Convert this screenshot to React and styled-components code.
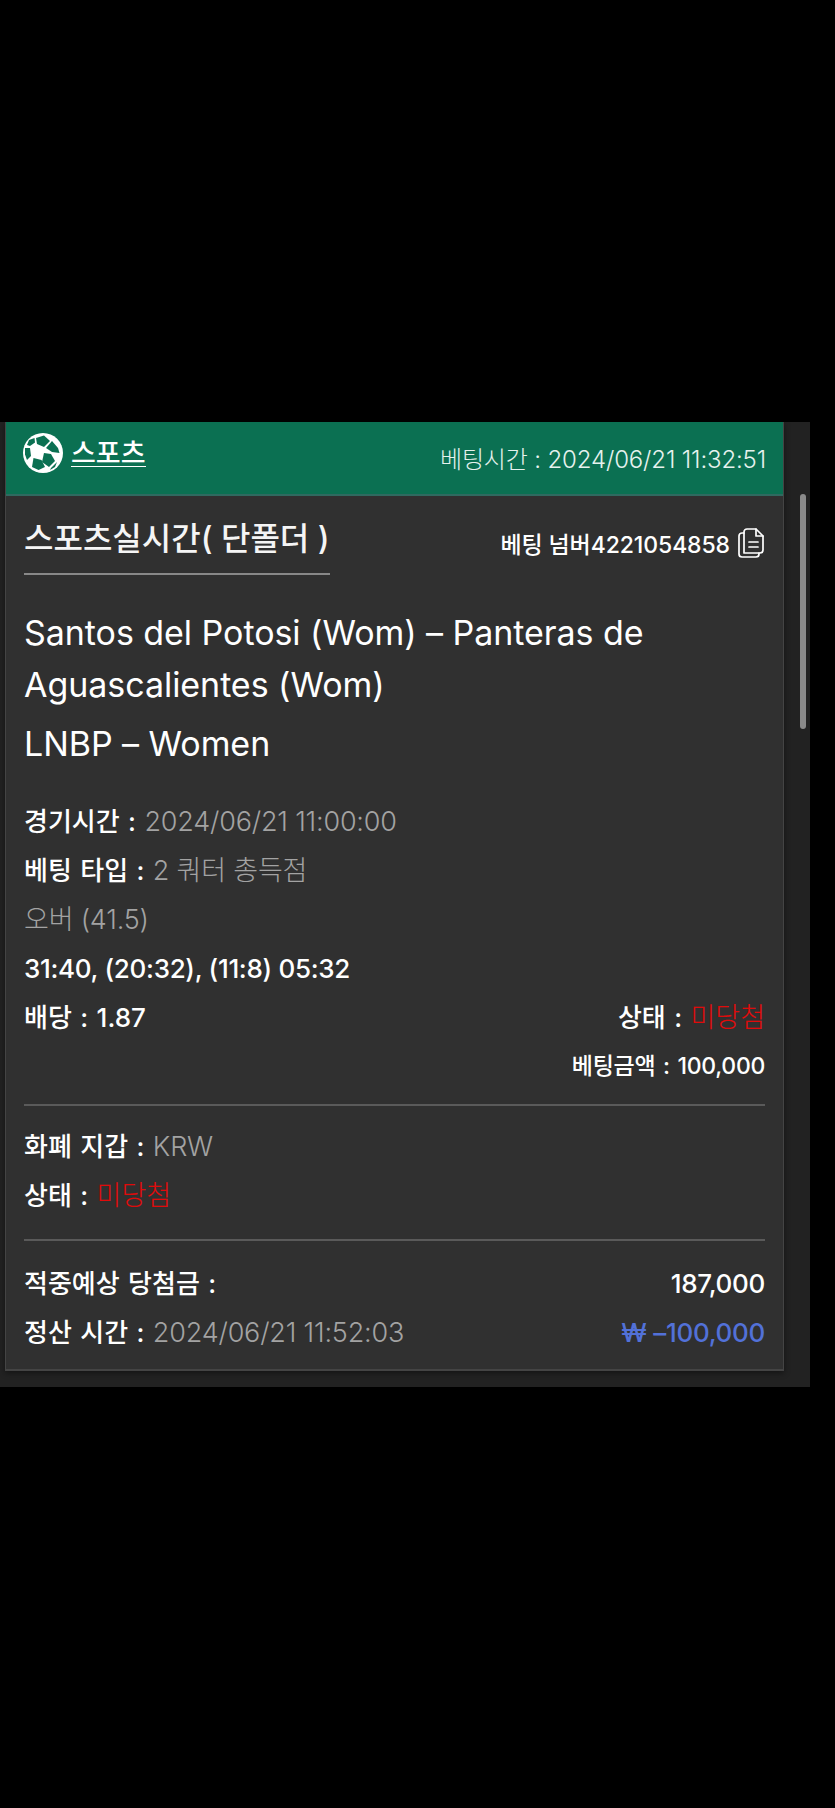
import React from 'react';
import styled, { createGlobalStyle } from 'styled-components';

const GlobalStyle = createGlobalStyle`
  html, body {
    margin: 0;
    padding: 0;
    background: #000;
  }
  body {
    font-family: Inter, "Noto Sans CJK KR", sans-serif;
    color: #fff;
  }
`;

const Page = styled.div`
  width: 835px;
  height: 1808px;
  padding-top: 422px;
  box-sizing: border-box;
  overflow: hidden;
`;

const Panel = styled.div`
  position: relative;
  width: 810px;
  height: 965px;
  background: #222;
  padding-left: 5px;
  box-sizing: border-box;
`;

const Thumb = styled.div`
  position: absolute;
  left: 800px;
  top: 72px;
  width: 6px;
  height: 235px;
  border-radius: 3px;
  background: #8a8a8a;
`;

const Card = styled.div`
  width: 779px;
  height: 949px;
  background: #303030;
  border: solid #444;
  border-width: 0 1px 2px 1px;
  box-sizing: border-box;
  box-shadow: 0 2px 6px rgba(0, 0, 0, 0.45);
`;

const Header = styled.div`
  height: 74px;
  background: #0b7052;
  border-bottom: 2px solid #2f6a60;
  box-sizing: border-box;
  display: flex;
  align-items: center;
  justify-content: space-between;
  padding: 0 17px 10px 16px;
`;

const Brand = styled.div`
  display: flex;
  align-items: center;
  gap: 7px;
  font-size: 27px;
  font-weight: 500;
`;

const BrandName = styled.span`
  border-bottom: 1px solid #fff;
  line-height: 25px;
  margin-top: 2px;
`;

const BetTime = styled.div`
  font-size: 24px;
  letter-spacing: -0.15px;
  color: #e6f2ee;
  font-weight: 300;
  margin-top: 8px;
`;

const Body = styled.div`
  padding: 19px 18px 0 18px;
`;

const TitleRow = styled.div`
  display: flex;
  align-items: center;
  justify-content: space-between;
  margin-bottom: 32px;
`;

const Title = styled.div`
  font-size: 32px;
  font-weight: 500;
  line-height: 48px;
  padding: 0 0 10px;
  border-bottom: 2px solid #888;
  color: #f5f5f5;
`;

const BetNumber = styled.div`
  display: flex;
  align-items: center;
  gap: 8px;
  font-size: 23px;
  letter-spacing: -0.1px;
  font-weight: 500;
  margin: -4px 0 0;
`;

const Match = styled.div`
  font-size: 34px;
  letter-spacing: -0.05px;
  line-height: 52px;
  font-weight: 400;
`;

const League = styled(Match)`
  margin-top: 7px;
  margin-bottom: 27px;
`;

const Row = styled.div`
  display: flex;
  justify-content: ${p => (p.$end ? 'flex-end' : 'space-between')};
  font-size: 26px;
  line-height: 49px;
  font-weight: 500;
  letter-spacing: -0.3px;
`;

const Label = styled.span`
  letter-spacing: 0;
  word-spacing: 1.5px;
`;

const Muted = styled.span`
  color: #a3a3a3;
  font-size: 27px;
  font-weight: 300;
  letter-spacing: -0.2px;
  word-spacing: 0;
`;

const Loss = styled(Muted)`
  color: #e00b0b;
  letter-spacing: 0;
`;

const Small = styled.span`
  font-size: 23px;
  word-spacing: 2px;
`;

const Payout = styled.span`
  color: #5271d8;
  font-weight: 500;
`;

const Rule = styled.div`
  height: 2px;
  background: #5a5a5a;
  margin: ${p => p.$top}px 0 ${p => p.$bottom}px;
`;

const SoccerBall = () => (
  <svg width="42" height="42" viewBox="-1 -1 42 42">
    <circle cx="20" cy="20" r="20" fill="#fff" />
    <g fill="#0b7052">
      <path d="M13 5l8-2.500L27 8l-6 6-7-3z" />
      <path d="M29 8l6 7 1.500 5-7.500-1-6-4z" />
      <path d="M21 20l7 1 4 7-6 6-7-5z" />
      <path d="M10.500 25l8 2 3.500 7-6.400 3L9 34z" />
      <path d="M2 15h5l1 8-4 4-2-5.500z" />
      <path d="M6 7l5.500-2 .5 4.500L7 13l-3-1z" />
      <path d="M28 35l6-6-2 5-5 3z" />
    </g>
  </svg>
);

const DocIcon = () => (
  <svg width="27" height="30" viewBox="0 0 27 30" fill="none" stroke="#fff" strokeWidth="1.7" strokeLinejoin="round" strokeLinecap="round">
    <path d="M6 25V4a3 3 0 0 1 3-3h9l7 7v14a3 3 0 0 1-3 3z" />
    <path d="M18 1v7h7" />
    <path d="M6 5H4a3 3 0 0 0-3 3v18a3 3 0 0 0 3 3h14a3 3 0 0 0 3-3v-1" />
    <path d="M11 14h9M11 19h9" />
  </svg>
);

const App = () => (
  <Page>
    <GlobalStyle />
    <Panel>
      <Thumb />
      <Card>
        <Header>
          <Brand>
            <SoccerBall />
            <BrandName>스포츠</BrandName>
          </Brand>
          <BetTime>베팅시간 : 2024/06/21 11:32:51</BetTime>
        </Header>
        <Body>
          <TitleRow>
            <Title>스포츠실시간( 단폴더 )</Title>
            <BetNumber>
              베팅 넘버4221054858
              <DocIcon />
            </BetNumber>
          </TitleRow>
          <Match>Santos del Potosi (Wom) – Panteras de Aguascalientes (Wom)</Match>
          <League>LNBP – Women</League>
          <Row><Label>경기시간 : <Muted>2024/06/21 11:00:00</Muted></Label></Row>
          <Row><Label>베팅 타입 : <Muted>2 쿼터 총득점</Muted></Label></Row>
          <Row><Muted>오버 (41.5)</Muted></Row>
          <Row><span>31:40, (20:32), (11:8) 05:32</span></Row>
          <Row>
            <Label>배당 : 1.87</Label>
            <Label>상태 : <Loss>미당첨</Loss></Label>
          </Row>
          <Row $end><Small>베팅금액 : 100,000</Small></Row>
          <Rule $top={13} $bottom={16} />
          <Row><Label>화폐 지갑 : <Muted>KRW</Muted></Label></Row>
          <Row><Label>상태 : <Loss>미당첨</Loss></Label></Row>
          <Rule $top={19} $bottom={18} />
          <Row>
            <Label>적중예상 당첨금 :</Label>
            <span>187,000</span>
          </Row>
          <Row>
            <Label>정산 시간 : <Muted>2024/06/21 11:52:03</Muted></Label>
            <Payout>₩ –100,000</Payout>
          </Row>
        </Body>
      </Card>
    </Panel>
  </Page>
);

export default App;
